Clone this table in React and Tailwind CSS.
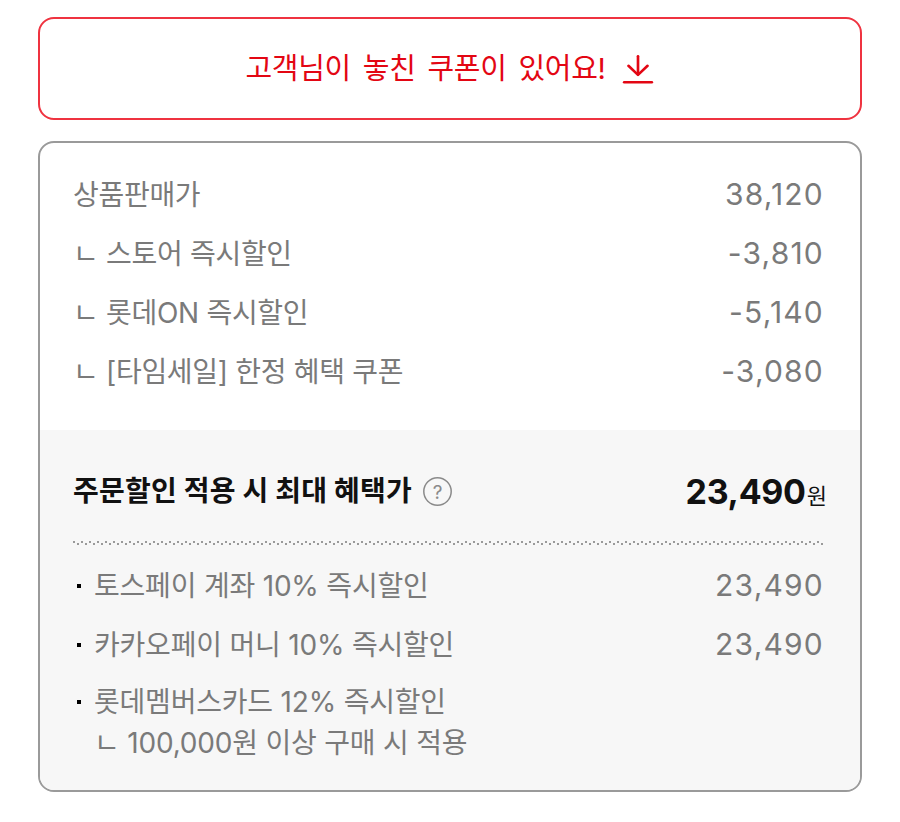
import React from "react";

const font = { fontFamily: 'Inter, "Noto Sans CJK KR", "Noto Sans", sans-serif' };

function Row({ label, value }) {
  return (
    <div className="flex items-center justify-between h-[59px]">
      <span className="text-[28px] text-[#7a7a7a] tracking-[-0.3px]">{label}</span>
      <span className="text-[30px] text-[#7a7a7a] tracking-[1.2px]">{value}</span>
    </div>
  );
}

function Bullet({ children, value }) {
  return (
    <div className="flex items-center justify-between h-[59px]">
      <div className="flex items-center">
        <span className="w-[4px] h-[4px] bg-black ml-[4px] mr-[13px]" />
        <span className="text-[28px] text-[#7a7a7a] tracking-[-0.2px]">{children}</span>
      </div>
      {value && <span className="text-[30px] text-[#7a7a7a] tracking-[1.2px]">{value}</span>}
    </div>
  );
}

export default function App() {
  return (
    <div className="w-[900px] h-[822px] bg-white px-[38px] pt-[17px]" style={font}>
      <div className="h-[103px] border-2 border-[#ef3340] rounded-[16px] flex items-center justify-center gap-[15px]">
        <span className="text-[29px] text-[#e30613] tracking-[-0.3px] [word-spacing:4px]">고객님이 놓친 쿠폰이 있어요!</span>
        <svg width="34" height="34" viewBox="0 0 32 32" fill="none" stroke="#e30613" strokeWidth="2.5" strokeLinecap="round" strokeLinejoin="round">
          <path d="M16 4v17" />
          <path d="M7 13l9 8.5 9-8.5" />
          <path d="M3 28.5h26" />
        </svg>
      </div>

      <div className="mt-[21px] h-[651px] border-2 border-[#9a9a9a] rounded-[16px] overflow-hidden flex flex-col">
        <div className="pl-[33px] pr-[36px] pt-[22px] pb-[29px]">
          <Row label="상품판매가" value="38,120" />
          <Row label="ㄴ 스토어 즉시할인" value="-3,810" />
          <Row label="ㄴ 롯데ON 즉시할인" value="-5,140" />
          <Row label="ㄴ [타임세일] 한정 혜택 쿠폰" value="-3,080" />
        </div>
        <div className="flex-1 bg-[#f7f7f7] pl-[33px] pr-[36px]">
          <div className="flex items-center justify-between h-[98px] mt-[12px]">
            <div className="flex items-center gap-[10px]">
              <span className="text-[28px] font-bold text-[#111111] tracking-[0.2px]">주문할인 적용 시 최대 혜택가</span>
              <svg width="31" height="31" viewBox="0 0 31 31" fill="none">
                <circle cx="15.5" cy="15.5" r="13.7" stroke="#8a8a8a" strokeWidth="1.5" />
                <text x="15.5" y="22.5" textAnchor="middle" fontSize="19" fill="#8a8a8a" fontFamily="Inter, sans-serif">?</text>
              </svg>
            </div>
            <div className="flex items-baseline mr-[-3px]">
              <span className="text-[34px] font-bold text-[#111111] tracking-[-0.3px]">23,490</span>
              <span className="text-[22px] text-[#111111] ml-[1px]">원</span>
            </div>
          </div>
          <svg className="block" width="752" height="6" viewBox="0 0 752 6">
            <defs>
              <pattern id="dz" width="8" height="6" patternUnits="userSpaceOnUse">
                <rect x="0" y="1" width="2" height="2" fill="#9a9a9a" />
                <rect x="4" y="3" width="2" height="2" fill="#9a9a9a" />
              </pattern>
            </defs>
            <rect width="752" height="6" fill="url(#dz)" />
          </svg>
          <div className="pt-[10px]">
            <Bullet value="23,490">토스페이 계좌 10% 즉시할인</Bullet>
            <Bullet value="23,490">카카오페이 머니 10% 즉시할인</Bullet>
            <div className="pt-[7px]">
              <div className="flex items-center h-[41px]">
                <span className="w-[4px] h-[4px] bg-black ml-[4px] mr-[13px]" />
                <span className="text-[28px] text-[#7a7a7a] tracking-[-0.2px]">롯데멤버스카드 12% 즉시할인</span>
              </div>
              <div className="flex items-center h-[41px] pl-[21px]">
                <span className="text-[28px] text-[#7a7a7a] tracking-[-0.2px]">ㄴ 100,000원 이상 구매 시 적용</span>
              </div>
            </div>
          </div>
        </div>
      </div>
    </div>
  );
}
